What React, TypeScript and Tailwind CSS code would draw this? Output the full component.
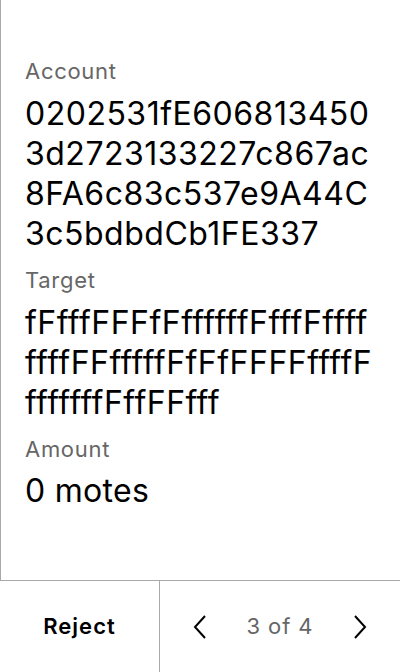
export default function App() {
  return (
    <div
      className="w-[400px] h-[672px] flex flex-col bg-white text-black"
      style={{ fontFamily: "Inter, 'Noto Sans', sans-serif" }}
    >
      {/* Details */}
      <div className="flex-1 border-l border-[#a9a9a9] pl-6 pr-6 pt-[57px] flex flex-col gap-3">
        <div className="flex flex-col">
          <span className="text-[22px] leading-7 tracking-[0.7px] text-[#666666]">Account</span>
          <span className="mt-[9px] text-[32px] leading-10 tracking-[0.5px] break-all">
            0202531fE6068134503d2723133227c867ac8FA6c83c537e9A44C3c5bdbdCb1FE337
          </span>
        </div>
        <div className="flex flex-col">
          <span className="text-[22px] leading-7 tracking-[0.7px] text-[#666666]">Target</span>
          <span className="mt-[9px] text-[32px] leading-10 tracking-[0.5px] break-all">
            fFfffFFFfFffffffFfffFffffffffFFfffffFfFfFFFFffffFfffffffFffFFfff
          </span>
        </div>
        <div className="flex flex-col">
          <span className="text-[22px] leading-7 tracking-[0.7px] text-[#666666]">Amount</span>
          <span className="mt-[8px] text-[32px] leading-10 tracking-[0.3px]">0 motes</span>
        </div>
      </div>

      {/* Footer */}
      <div className="h-[92px] shrink-0 flex border-t border-[#a9a9a9]">
        <button className="w-[160px] shrink-0 flex items-center justify-center border-r border-[#a9a9a9] text-[22px] font-semibold tracking-[1px]">
          Reject
        </button>
        <div className="flex-1 flex items-center justify-between pl-[32px] pr-[32px]">
          <svg width="16" height="28" viewBox="0 0 16 28" fill="none">
            <path d="M13 3 L3 14 L13 25" stroke="black" strokeWidth="2" />
          </svg>
          <span className="text-[22px] tracking-[0.9px] text-[#666666]">3 of 4</span>
          <svg width="16" height="28" viewBox="0 0 16 28" fill="none">
            <path d="M3 3 L13 14 L3 25" stroke="black" strokeWidth="2" />
          </svg>
        </div>
      </div>
    </div>
  );
}
